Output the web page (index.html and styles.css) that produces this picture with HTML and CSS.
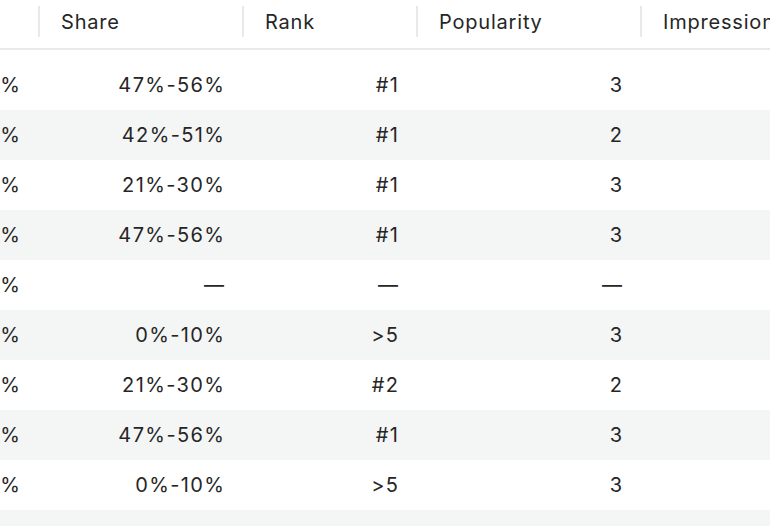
FILE: index.html
```html
<!DOCTYPE html>
<html>
<head>
<meta charset="utf-8">
<link rel="stylesheet" href="styles.css">
</head>
<body>
<div class="table">
  <div class="head">
    <div class="hcell"><span class="label"></span><span class="sep"></span></div>
    <div class="hcell"><span class="label">Share</span><span class="sep"></span></div>
    <div class="hcell"><span class="label">Rank</span><span class="sep"></span></div>
    <div class="hcell"><span class="label">Popularity</span><span class="sep"></span></div>
    <div class="hcell"><span class="label">Impressions</span><span class="sep"></span></div>
  </div>
  <div class="body">
    <div class="row"><div class="cell">%</div><div class="cell">47%-56%</div><div class="cell">#1</div><div class="cell">3</div><div class="cell"></div></div>
    <div class="row"><div class="cell">%</div><div class="cell">42%-51%</div><div class="cell">#1</div><div class="cell">2</div><div class="cell"></div></div>
    <div class="row"><div class="cell">%</div><div class="cell">21%-30%</div><div class="cell">#1</div><div class="cell">3</div><div class="cell"></div></div>
    <div class="row"><div class="cell">%</div><div class="cell">47%-56%</div><div class="cell">#1</div><div class="cell">3</div><div class="cell"></div></div>
    <div class="row"><div class="cell">%</div><div class="cell">—</div><div class="cell">—</div><div class="cell">—</div><div class="cell"></div></div>
    <div class="row"><div class="cell">%</div><div class="cell">0%-10%</div><div class="cell">&gt;5</div><div class="cell">3</div><div class="cell"></div></div>
    <div class="row"><div class="cell">%</div><div class="cell">21%-30%</div><div class="cell">#2</div><div class="cell">2</div><div class="cell"></div></div>
    <div class="row"><div class="cell">%</div><div class="cell">47%-56%</div><div class="cell">#1</div><div class="cell">3</div><div class="cell"></div></div>
    <div class="row"><div class="cell">%</div><div class="cell">0%-10%</div><div class="cell">&gt;5</div><div class="cell">3</div><div class="cell"></div></div>
    <div class="row"><div class="cell"></div><div class="cell"></div><div class="cell"></div><div class="cell"></div><div class="cell"></div></div>
  </div>
</div>
</body>
</html>
```
FILE: styles.css
```css
html, body {
  margin: 0;
  padding: 0;
  background: #ffffff;
  overflow: hidden;
}
body {
  font-family: "Inter", "Liberation Sans", sans-serif;
  font-size: 20px;
  color: #262626;
  width: 770px;
  height: 526px;
}
.table {
  --cols: 40px 204px 174px 224px 240px;
  width: 882px;
}
.head {
  display: grid;
  grid-template-columns: var(--cols);
  height: 48px;
  border-bottom: 2px solid #e8e9ea;
}
.hcell {
  display: flex;
  justify-content: space-between;
  align-items: flex-start;
  padding-left: 21px;
}
.label {
  line-height: 24px;
  margin-top: 10px;
  white-space: nowrap;
  letter-spacing: 0.8px;
}
.sep {
  width: 2px;
  height: 31px;
  margin-top: 6px;
  background: #e8e9ea;
  flex: none;
}
.body {
  padding-top: 10px;
}
.row {
  display: grid;
  grid-template-columns: var(--cols);
  height: 50px;
  align-items: center;
}
.row:nth-child(even) {
  background: #f4f5f5;
}
.cell {
  text-align: right;
  padding-right: 18.6px;
  white-space: nowrap;
  line-height: 24px;
  letter-spacing: 1.4px;
}
```
